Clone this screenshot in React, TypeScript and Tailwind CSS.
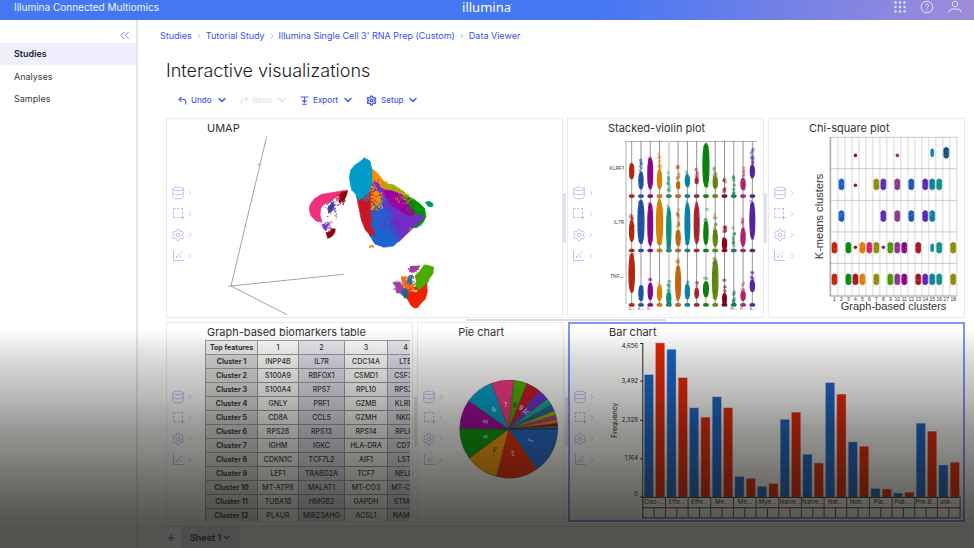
import React from "react";
import { ChevronDown, ChevronRight, ChevronsLeft, Database, Settings, Plus } from "lucide-react";

/* Small deterministic generator, so every render draws the same cloud of points. */
function makeRandom(seed: number) {
  let state = seed;
  return () => {
    state = (state * 1664525 + 1013904223) % 4294967296;
    return state / 4294967296;
  };
}

const CLUSTER_COLORS = [
  "#c81e0a", "#1c5fbf", "#028a0a", "#a8101e", "#e07a00", "#cf2468", "#8c8c00", "#5a28b4", "#459600",
  "#8c3488", "#8a0088", "#1a55b0", "#a01424", "#5c22b0", "#0880a4", "#0c9080", "#14507c", "#8c8c00",
];

/* ---------- Header ---------- */

function Header() {
  return (
    <header className="grid h-5 grid-cols-[1fr_auto_1fr] items-start bg-[linear-gradient(100deg,#4677f3_62%,#7782e4_82%,#9f8cd8_100%)] text-white">
      <span className="pl-[14px] text-[10px] leading-[14px] text-blue-50">Illumina Connected Multiomics</span>
      <span className="flex font-['Noto_Sans',sans-serif] text-[13px] leading-[14px]">
        illumina
        <span aria-hidden="true" className="mt-1 size-px rounded-full bg-white" />
      </span>
      <div className="flex h-[14px] items-center justify-end gap-[14px] pr-3 text-blue-100">
        <button aria-label="Apps">
          <svg width="12" height="12" viewBox="0 0 12 12" fill="currentColor">
            {[1.5, 6, 10.5].map((y) => [1.5, 6, 10.5].map((x) => <circle key={`${x}-${y}`} cx={x} cy={y} r="1.2" />))}
          </svg>
        </button>
        <button aria-label="Help">
          <svg width="14" height="14" viewBox="0 0 14 14" fill="none" stroke="currentColor">
            <circle cx="7" cy="7" r="5.8" />
            <path d="M5.5 5.6a1.5 1.5 0 1 1 2.3 1.3c-.6.3-.8.6-.8 1.2M7 9.3v1" />
          </svg>
        </button>
        <button aria-label="Account">
          <svg width="14" height="14" viewBox="0 0 14 14" fill="none" stroke="currentColor">
            <circle cx="7" cy="4" r="2.8" />
            <path d="M1 12.6c0-2.4 1.4-3.6 3.4-3.6h5.2c2 0 3.4 1.2 3.4 3.6" />
          </svg>
        </button>
      </div>
    </header>
  );
}

/* ---------- Side navigation ---------- */

function Sidebar() {
  return (
    <nav aria-label="Main" className="w-[138px] shrink-0 border-r-2 border-[#e6e6ea] text-[9px] text-[#3a3a40]">
      <div className="flex h-[23px] items-end justify-end pr-1">
        <button aria-label="Collapse menu" className="text-[#6b7af8]">
          <ChevronsLeft size={15} strokeWidth={1.6} />
        </button>
      </div>
      <ul>
        <li>
          <a href="#studies" aria-current="page" className="flex h-[22px] items-center bg-[#eeeefc] pl-[14px] font-semibold text-[#1f1f28]">
            Studies
          </a>
        </li>
        <li>
          <a href="#analyses" className="flex h-[23px] items-center pl-[14px]">Analyses</a>
        </li>
        <li>
          <a href="#samples" className="flex h-[22px] items-center pl-[14px]">Samples</a>
        </li>
      </ul>
    </nav>
  );
}

/* ---------- Page head ---------- */

const CRUMBS = ["Studies", "Tutorial Study", "Illumina Single Cell 3' RNA Prep (Custom)", "Data Viewer"];

function Breadcrumbs() {
  return (
    <nav aria-label="Breadcrumb" className="-ml-[6px] pt-2">
      <ol className="flex h-[15px] items-center text-[9px] text-[#3a4ef0]">
        {CRUMBS.map((crumb, i) => (
          <li key={crumb} className="flex items-center">
            {i > 0 && <ChevronRight size={8} strokeWidth={2} className="mx-[3px] text-gray-400" />}
            <a href="#crumb">{crumb}</a>
          </li>
        ))}
      </ol>
    </nav>
  );
}

function UndoIcon() {
  return (
    <svg width="9" height="9" viewBox="0 0 9 9" fill="none" stroke="currentColor" strokeWidth="1.1">
      <path d="M3.5.8 1 3.3l2.5 2.5M1 3.3h4.2c1.6 0 2.6 1 2.6 2.4v2.8" />
    </svg>
  );
}

function ExportIcon() {
  return (
    <svg width="9" height="9" viewBox="0 0 9 9" fill="none" stroke="currentColor" strokeWidth="1.1">
      <path d="M.5 1h8M4.5 1v5M2.3 4.2l2.2 2.2 2.2-2.2M2 8.2h5" />
    </svg>
  );
}

function Toolbar() {
  return (
    <div className="mt-[7px] flex h-4 items-center gap-3 pl-3 text-[8px] font-medium text-[#4558ee]">
      <button className="flex items-center gap-1"><UndoIcon />Undo<ChevronDown size={12} strokeWidth={3} /></button>
      <button disabled className="flex items-center gap-1 text-[#e2e2e8]">
        <span className="-scale-x-100"><UndoIcon /></span>Redo<ChevronDown size={12} strokeWidth={3} />
      </button>
      <button className="flex items-center gap-1"><ExportIcon />Export<ChevronDown size={12} strokeWidth={3} /></button>
      <button className="flex items-center gap-1"><Settings size={11} strokeWidth={3} />Setup<ChevronDown size={12} strokeWidth={3} /></button>
    </div>
  );
}

/* ---------- Panel frame ---------- */

function SelectIcon() {
  return (
    <svg width="13" height="13" viewBox="0 0 13 13" fill="none" stroke="currentColor">
      <path d="M1.5 3.5v-2h2M5 1.5h2M8.500 1.500h2v2M10.500 5v2M1.500 5v2M1.500 8.500v2h2M5 10.500h2M10.500 8.500v4M8.500 10.500h4" />
    </svg>
  );
}

function PlotIcon() {
  return (
    <svg width="13" height="13" viewBox="0 0 13 13" fill="none" stroke="currentColor">
      <path d="M1.500 1v10.500h10.500" strokeWidth=".9" />
      <path d="M4 8.500 5.500 7M6 5l1 1M8 8l1.200-1.500M8.500 4l1.500-.8M6.500 8.500h.8" strokeWidth="1.200" />
    </svg>
  );
}

function PanelTools() {
  const tools = [
    { name: "Data", icon: <Database size={14} strokeWidth={1.5} /> },
    { name: "Select", icon: <SelectIcon /> },
    { name: "Configure", icon: <Settings size={14} strokeWidth={1.6} /> },
    { name: "Axes", icon: <PlotIcon /> },
  ];
  return (
    <div className="w-10 shrink-0 pt-[63px] pl-[3px] text-[#b2bafb]">
      {tools.map((tool) => (
        <button key={tool.name} aria-label={tool.name} className="flex h-[21px] items-center">
          <span className="flex w-4 justify-center">{tool.icon}</span>
          <ChevronRight size={8} strokeWidth={2} />
        </button>
      ))}
    </div>
  );
}

function Panel({ title, active, className, children }: { title: string; active?: boolean; className: string; children: React.ReactNode }) {
  return (
    <section
      className={`flex h-[200px] min-w-0 basis-0 overflow-hidden border ${active ? "border-[#8391fa] ring-1 ring-[#8391fa] ring-inset" : "border-[#eaeaee]"} ${className}`}
    >
      <PanelTools />
      <div className="flex min-w-0 flex-1 flex-col">
        <h2 className="h-[18px] shrink-0 text-[11px] leading-[18px] whitespace-nowrap text-[#303034]">{title}</h2>
        {children}
      </div>
    </section>
  );
}

function ColumnHandle() {
  return (
    <div className="flex w-1 shrink-0 items-center justify-center">
      <div className="h-[50px] w-[3px] bg-[#e2e2e4]" />
    </div>
  );
}

/* ---------- UMAP ---------- */

const UMAP_SHAPES: [string, string][] = [
  ["#ff8c00", "M215 70 235 88 252 110 262 145 250 175 235 192 214 200 208 150Z"],
  ["#a8a808", "M242 104 262 116 282 120 312 140 330 160 300 165 262 150Z"],
  ["#009600", "M318 152 345 165 360 177 374 190 378 215 370 232 358 243 338 250 325 200 305 170Z"],
  ["#7030c8", "M222 108 240 120 262 160 300 195 345 212 368 206 370 220 345 240 330 258 312 275 297 290 270 260 250 190 240 150Z"],
  ["#a000a0", "M248 134 275 137 308 150 322 175 348 205 330 214 300 196 270 178Z"],
  ["#1c64d0", "M210 198 240 190 262 196 285 225 300 285 280 303 252 307 225 297 208 270Z"],
  ["#c81828", "M170 156 190 155 212 138 212 200 214 250 228 268 212 272 196 255 184 225 177 190Z"],
  ["#009cc8", "M193 38 210 48 216 75 216 115 208 140 196 150 186 158 176 166 165 145 155 135 148 100 152 75 165 60 180 50Z"],
  ["#009664", "M376 172 388 169 399 176 398 185 386 185Z"],
  ["#f0307a", "M28 195 30 180 42 162 65 148 95 143 135 136 128 146 104 160 90 172 72 178 62 190 60 210 66 232 48 228 33 212Z"],
  ["#900010", "M78 262 88 264 95 252 106 252 103 265 92 277 83 280Z"],
  ["#900010", "M116 158 124 143 143 136 140 150 130 170 118 172Z"],
  ["#4038b8", "M84 186 98 172 104 178 96 198 86 205Z"],
  ["#8038c8", "M66 238 76 240 88 234 82 246 78 258 70 250Z"],
  ["#a040a0", "M332 364 358 363 355 372 342 382 328 380Z"],
  ["#f07018", "M304 395 314 396 322 412 340 420 345 432 325 438 308 422Z"],
  ["#206498", "M326 393 338 390 334 412 322 415Z"],
  ["#206498", "M304 432 318 430 326 440 322 462 306 450Z"],
  ["#a040a0", "M278 413 300 411 310 428 304 445 290 443 286 420Z"],
  ["#4caa00", "M372 360 384 361 401 366 399 386 390 398 380 420 352 440 346 428 350 408 345 392 358 380Z"],
  ["#f02000", "M318 455 332 440 350 442 380 416 382 440 376 462 362 476 355 486 345 490 334 482Z"],
];

const UMAP_SPECKLES: [number, number, number, number, number, string][] = [
  [232, 165, 20, 30, 110, "#ff8c00"], [230, 130, 20, 26, 60, "#7030c8"], [230, 185, 20, 18, 60, "#1c64d0"],
  [262, 215, 32, 48, 110, "#7030c8"], [285, 238, 18, 26, 45, "#a000a0"], [212, 200, 14, 70, 60, "#c81828"],
  [255, 185, 28, 30, 60, "#1c64d0"], [310, 160, 28, 16, 50, "#a8a808"], [320, 185, 28, 25, 70, "#a000a0"],
  [340, 185, 22, 24, 60, "#009600"], [350, 235, 20, 16, 30, "#7030c8"], [190, 155, 22, 12, 50, "#009cc8"],
  [190, 175, 16, 16, 30, "#c81828"], [250, 118, 14, 10, 25, "#ff8c00"], [290, 270, 14, 18, 40, "#7030c8"],
  [92, 190, 16, 20, 30, "#4038b8"], [125, 160, 15, 18, 40, "#900010"], [95, 262, 12, 14, 22, "#900010"],
  [80, 240, 14, 10, 20, "#8038c8"], [108, 168, 18, 14, 16, "#f0307a"], [96, 218, 16, 20, 9, "#d03020"],
  [100, 170, 16, 10, 9, "#10a080"], [214, 304, 6, 4, 16, "#f07018"], [332, 252, 5, 5, 9, "#f07018"],
  [340, 372, 16, 10, 26, "#a040a0"], [325, 410, 22, 18, 46, "#f07018"], [332, 405, 13, 15, 26, "#206498"],
  [290, 425, 14, 18, 22, "#a040a0"], [315, 445, 13, 15, 26, "#206498"], [340, 436, 20, 10, 36, "#f02000"],
  [352, 415, 14, 22, 22, "#4caa00"], [350, 368, 14, 8, 5, "#d03020"],
];

function UmapPlot() {
  const random = makeRandom(7);
  return (
    <svg role="img" aria-label="UMAP of cell clusters" viewBox="207 137 355 180" preserveAspectRatio="xMinYMin meet" className="block w-full overflow-visible">
      <g stroke="#8c8c8c" strokeWidth=".8" fill="none">
        <path d="M266.700 136.500 231 286 344 274.300M231 286 287 314.700M228.500 286h4M257.500 164.500h3M244 226h2.500" />
      </g>
      <g transform="translate(300 145) scale(.3333)">
        {UMAP_SHAPES.map(([color, d]) => (
          <path key={d} d={d} fill={color} stroke={color} strokeWidth="3" strokeLinejoin="round" strokeDasharray="3 1.500" />
        ))}
        {UMAP_SPECKLES.map(([cx, cy, rx, ry, count, color], group) =>
          Array.from({ length: count }, (_, i) => {
            const angle = random() * Math.PI * 2;
            const radius = Math.sqrt(random());
            const size = 2 + random() * 2;
            return <rect key={`${group}-${i}`} x={cx + Math.cos(angle) * radius * rx - 1} y={cy + Math.sin(angle) * radius * ry - 1} width={size} height={size} fill={color} />;
          }),
        )}
      </g>
    </svg>
  );
}

/* ---------- Stacked violin ---------- */

const VIOLIN_COLORS = ["#b8260f", "#1d52a6", "#86088a", "#d68200", "#0f8f7d", "#c4640f", "#0882aa", "#a8242f", "#0d8210", "#5f8a0e", "#8b0018", "#128055", "#b42468", "#5524a4"];

/* Per gene: [sparse top, dense top, bottom, half width], in thirds of a pixel below the plot's top. */
const VIOLINS: [string, number, [number, number, number, number][]][] = [
  ["KLRF1", 168, [
    [142, 146, 192, 7], [135, 172, 222, 7], [125, 130, 222, 8], [115, 165, 222, 7], [170, 235, 236, 6], [140, 200, 222, 5], [168, 180, 214, 7],
    [160, 190, 206, 5], [80, 86, 216, 10], [150, 185, 220, 7], [190, 232, 234, 6], [178, 234, 236, 3], [158, 190, 224, 7], [100, 150, 188, 7],
  ]],
  ["IL7R", 222, [
    [300, 315, 380, 7], [250, 255, 386, 10], [260, 264, 392, 8], [250, 255, 390, 10], [272, 278, 404, 7], [278, 345, 392, 7], [256, 264, 390, 8],
    [260, 266, 386, 8], [282, 318, 388, 7], [298, 345, 394, 7], [330, 370, 402, 7], [335, 390, 392, 5], [305, 340, 394, 7], [256, 262, 372, 8],
  ]],
  ["TNF...", 276, [
    [410, 416, 532, 9], [505, 512, 556, 7], [487, 505, 554, 7], [495, 512, 556, 7], [495, 532, 568, 7], [432, 452, 554, 8], [500, 508, 552, 7],
    [500, 520, 548, 6], [485, 500, 546, 8], [430, 436, 554, 9], [495, 535, 568, 6], [515, 566, 568, 4], [503, 528, 556, 7], [465, 495, 530, 7],
  ]],
];

function ViolinPlot() {
  const random = makeRandom(21);
  return (
    <svg role="img" aria-label="Expression of three genes by cluster" viewBox="608 137 155 180" preserveAspectRatio="xMinYMin meet" className="block w-full overflow-visible font-['Inter',sans-serif]">
      <path d="M626 141v163M625 141.500h132" stroke="#a0a0a0" strokeWidth=".8" />
      {VIOLIN_COLORS.map((color, i) => (
        <path key={color} d={`M${631.7 + i * 9.28} 141V306`} stroke={i === 4 || i === 8 ? "#d8d8d8" : "#777"} strokeWidth={i === 4 || i === 8 ? 2 : 0.8} />
      ))}
      {VIOLINS.map(([gene, labelY, shapes], row) => (
        <g key={gene}>
          <text x="624" y={labelY + 2} textAnchor="end" fontSize="5" fill="#444">{gene}</text>
          {shapes.map(([top, dense, bottom, half], i) => {
            const x = 631.7 + i * 9.28;
            const color = VIOLIN_COLORS[i];
            const y0 = 115 + top / 3;
            const y1 = 115 + dense / 3;
            const y2 = 115 + bottom / 3;
            const w = half / 3;
            const dots = Math.max(4, Math.round((y2 - y0) * 0.6));
            return (
              <g key={i}>
                {y2 - y1 > 2 && (
                  <path
                    d={`M${x} ${y1}C${x + w * 1.2} ${y1} ${x + w * 1.2} ${y2} ${x} ${y2}C${x - w * 1.2} ${y2} ${x - w * 1.2} ${y1} ${x} ${y1}Z`}
                    fill={color} stroke={color} strokeWidth="1.200"
                  />
                )}
                {Array.from({ length: dots }, (_, k) => (
                  <circle key={k} cx={x + (random() - 0.5) * w * 1.1} cy={y0 + random() * (y2 - y0)} r="1.200" fill={color} fillOpacity=".25" stroke={k % 4 === 0 && (i === 9 || i === 12) ? "#7a2f8c" : color} strokeOpacity=".6" strokeWidth=".5" />
                ))}
                <rect x={x - 2.8} y={194.5 + row * 54.4} width="5.600" height="3.200" rx="1.600" fill={color} stroke="#333" strokeOpacity=".5" strokeWidth=".5" />
              </g>
            );
          })}
        </g>
      ))}
      {["C...", "E...", "E...", "", "", "", "", "", "", "", "", "Pl...", "P...", "u..."].map((label, i) => (
        <text key={i} x={631.7 + i * 9.28} y="310" fontSize="4" textAnchor="middle" fill="#333">{label}</text>
      ))}
    </svg>
  );
}

/* ---------- Chi-square ---------- */

const CHI_ROWS: { pods: number[]; dots: number[] }[] = [
  { pods: [17, 15], dots: [4, 10] },
  { pods: [2, 7, 8, 10, 12, 14, 15, 16], dots: [4] },
  { pods: [2, 8, 10, 12, 14, 15], dots: [] },
  { pods: [1, 3, 5, 6, 7, 9, 10, 11, 13, 15, 16, 18], dots: [4, 8] },
  { pods: [1, 3, 4, 5, 7, 9, 10, 11, 13, 14, 15, 16, 18], dots: [] },
];

function ChiSquarePlot() {
  const random = makeRandom(5);
  return (
    <svg role="img" aria-label="K-means clusters against graph-based clusters" viewBox="809 137 154 180" preserveAspectRatio="xMinYMin meet" className="block w-full overflow-visible font-['Liberation_Sans',sans-serif]">
      <g stroke="#c4c4c8" strokeWidth=".7">
        {Array.from({ length: 19 }, (_, i) => <path key={i} d={`M${830.8 + i * 6.95} 137V295`} />)}
        {[137.3, 168.5, 200, 231.3, 262.700].map((y) => <path key={y} d={`M830 ${y}H956`} stroke="#b4b4b4" />)}
      </g>
      <path d="M830 137V295H956" fill="none" stroke="#888" strokeWidth=".9" />
      {CHI_ROWS.map((row, r) => {
        const y = 152.700 + r * 31.45;
        return (
          <g key={r}>
            {row.pods.map((col) => {
              const x = 834.3 + (col - 1) * 6.94;
              const color = CLUSTER_COLORS[col - 1];
              const small = (r === 0 || r === 3) && col === 15;
              return (
                <g key={col}>
                  <rect x={x - (small ? 1.5 : 2.5)} y={y - (small ? 4 : 5.3)} width={small ? 3 : 5} height={small ? 8 : 10.6} rx={small ? 1.5 : 2} fill={color} stroke={color} strokeWidth=".8" strokeDasharray="1 .5" />
                  {[0, 1, 2, 3, 4].map((k) => (
                    <circle key={k} cx={x + (random() - 0.5) * 3} cy={y + (random() - 0.5) * 8} r=".5" fill="#fff" fillOpacity=".22" />
                  ))}
                </g>
              );
            })}
            {row.dots.map((col) => (
              <circle key={col} cx={834.3 + (col - 1) * 6.94} cy={r === 0 ? 155.300 : r === 1 ? 185 : 246.500} r="1.800" fill={CLUSTER_COLORS[col - 1]} />
            ))}
          </g>
        );
      })}
      {CLUSTER_COLORS.map((_, i) => (
        <text key={i} x={834.3 + i * 6.94} y="300" fontSize="5" textAnchor="middle" fill="#333">{i + 1}</text>
      ))}
      <text x="893" y="309" fontSize="11" textAnchor="middle" fill="#333">Graph-based clusters</text>
      <text transform="translate(823 216) rotate(-90)" fontSize="11" textAnchor="middle" fill="#333">K-means clusters</text>
    </svg>
  );
}

/* ---------- Biomarkers table ---------- */

const BIOMARKERS = [
  ["INPP4B", "IL7R", "CDC14A", "LTB"],
  ["S100A9", "RBFOX1", "CSMD1", "CSF3R"],
  ["S100A4", "RPS7", "RPL10", "RPS27"],
  ["GNLY", "PRF1", "GZMB", "KLRD1"],
  ["CD8A", "CCL5", "GZMH", "NKG7"],
  ["RPS28", "RPS13", "RPS14", "RPLP1"],
  ["IGHM", "IGKC", "HLA-DRA", "CD74"],
  ["CDKN1C", "TCF7L2", "AIF1", "LST1"],
  ["LEF1", "TRABD2A", "TCF7", "NELL2"],
  ["MT-ATP8", "MALAT1", "MT-CO3", "MT-CO2"],
  ["TUBA1B", "HMGB2", "GAPDH", "STMN1"],
  ["PLAUR", "MIR23AHG", "ACSL1", "NAMPT"],
];

function BiomarkersTable() {
  return (
    <div className="-mt-px mr-[2px] -ml-[2px] min-h-0 flex-1 overflow-hidden">
      <table className="w-[218px] table-fixed border-collapse text-center text-[7px] leading-[13px] text-[#333]">
        <colgroup>
          <col className="w-[52px]" />
          <col className="w-[41px]" />
          <col className="w-[46px]" />
          <col className="w-[43px]" />
          <col className="w-[36px]" />
        </colgroup>
        <thead>
          <tr className="h-[14px] bg-[#f4f4f4]">
            <th scope="col" className="border border-[#9c9c9c] bg-[#f0f0f0] p-0 font-bold whitespace-nowrap">Top features</th>
            {[1, 2, 3, 4].map((n) => (
              <th key={n} scope="col" className="border border-[#9c9c9c] p-0 font-medium even:bg-white odd:bg-[#eaeaf2]">{n}</th>
            ))}
          </tr>
        </thead>
        <tbody>
          {BIOMARKERS.map((genes, row) => (
            <tr key={row} className="h-[14px]">
              <th scope="row" className="border border-[#9c9c9c] bg-[#dedede] p-0 font-bold">Cluster {row + 1}</th>
              {genes.map((gene) => (
                <td key={gene} className="border border-[#9c9c9c] p-0 font-medium whitespace-nowrap odd:bg-[#e0e2ee]">{gene}</td>
              ))}
            </tr>
          ))}
        </tbody>
      </table>
    </div>
  );
}

/* ---------- Pie ---------- */

/* End angle in degrees, clockwise from three o'clock. */
const SLICES: [number, string][] = [
  [55, "#1c64cc"], [104.500, "#e82400"], [143.600, "#f89800"], [180.500, "#009800"], [215.300, "#a000a0"], [249.500, "#00a0cc"],
  [276.200, "#f83484"], [291.900, "#4cac00"], [308.600, "#c81424"], [322, "#6c2cd4"], [330.500, "#10ac98"], [338.200, "#1c6498"],
  [343.800, "#acac00"], [348.700, "#a03ca0"], [353.400, "#f87000"], [356.500, "#980010"], [358.300, "#108060"], [360, "#4424a8"],
];

function PieChart() {
  const cx = 508.3;
  const cy = 430;
  const r = 49.5;
  const point = (deg: number, radius: number) => `${cx + radius * Math.cos((deg * Math.PI) / 180)} ${cy + radius * Math.sin((deg * Math.PI) / 180)}`;
  return (
    <svg role="img" aria-label="Share of cells by cluster" viewBox="457 341 106 180" preserveAspectRatio="xMinYMin meet" className="block w-full overflow-visible font-['Liberation_Sans',sans-serif]">
      {SLICES.map(([end, color], i) => {
        const start = i === 0 ? 0 : SLICES[i - 1][0];
        const mid = (start + end) / 2;
        return (
          <g key={color}>
            <path d={`M${cx} ${cy}L${point(start, r)}A${r} ${r} 0 0 1 ${point(end, r)}Z`} fill={color} stroke="#333" strokeWidth=".4" />
            {i < 10 && (
              <text transform={`translate(${point(mid, 24.5)}) rotate(${mid + 90})`} y="2" fontSize="7" textAnchor="middle" fill={i === 2 || i === 7 ? "#222" : "#fff"}>{i + 1}</text>
            )}
          </g>
        );
      })}
    </svg>
  );
}

/* ---------- Bars ---------- */

const BARS: [string, number, number][] = [
  ["Clas-...", 374.700, 343], ["Effe...", 349.300, 377.700], ["Effe...", 407.700, 417], ["Me...", 396.700, 407.700], ["Me...", 476.300, 478],
  ["Mye...", 486, 483.300], ["Naive...", 419.300, 412], ["Naive...", 454, 462.700], ["Nat...", 382.700, 394], ["Non...", 441.700, 446],
  ["Pla...", 488.300, 488.700], ["Plat-...", 492.700, 492], ["Pre-B...", 423, 431], ["unk-...", 464.700, 462],
];

function BarChart() {
  const base = 496.7;
  return (
    <svg role="img" aria-label="Frequency by cell type" viewBox="609 341 354 180" preserveAspectRatio="xMinYMin meet" className="block w-full overflow-visible font-['Inter',sans-serif]">
      {([["4,656", 343.5, 346], ["3,492", 381, 381], ["2,328", 420, 420], ["1,164", 458.5, 458], ["0", 496.5, 494]] as [string, number, number][]).map(([label, tick, y]) => (
        <g key={label}>
          <path d={`M640 ${tick}h3`} stroke="#222" />
          <text x="638" y={y + 2} fontSize="6" textAnchor="end" fill="#222">{label}</text>
        </g>
      ))}
      <text transform="translate(616.500 420) rotate(-90)" fontSize="7" textAnchor="middle" fill="#222">Frequency</text>
      <path d="M642.700 343V517.500" stroke="#222" />
      {BARS.map(([label, a, b], i) => {
        const x = 642.7 + i * 22.6;
        return (
          <g key={i}>
            <rect x={x + 1.5} y={a} width="9" height={base - a} fill="#1662c8" stroke="#b4c4dc" strokeWidth=".4" />
            <rect x={x + 12.8} y={b} width="9" height={base - b} fill="#e82200" stroke="#e8b4ac" strokeWidth=".4" />
            <path d={`M${x + 22.6} 497v20.500M${x + 11.3} 507.300v10`} stroke="#222" strokeWidth=".8" />
            <text x={x + 11.3} y="504" fontSize="6" textAnchor="middle" fill="#222">{label}</text>
          </g>
        );
      })}
      <path d="M642 497H959.500M642 507.300H959.500M642 517.400H959.500" stroke="#222" strokeWidth=".9" />
    </svg>
  );
}

/* ---------- Sheet tabs ---------- */

function SheetTabs() {
  return (
    <div className="-ml-[5px] mt-1 flex h-[22px] items-center border-t border-[#dcdce0] text-[9px] font-semibold text-[#33333a]">
      <button aria-label="Add sheet" className="flex w-5 justify-center text-[#4a5cf0]">
        <Plus size={10} strokeWidth={3} />
      </button>
      <button className="flex h-full items-center gap-px bg-[#e6e8fa] px-[9px]">
        Sheet 1<ChevronDown size={9} strokeWidth={3} />
      </button>
    </div>
  );
}

export default function App() {
  return (
    <div className="relative flex min-h-screen flex-col bg-white font-['Inter',sans-serif]">
      <Header />
      <div className="flex flex-1">
        <Sidebar />
        <main className="min-w-0 flex-1 pr-[9px] pl-7">
          <Breadcrumbs />
          <h1 className="mt-[14px] h-7 text-[18px] leading-7 font-light text-[#1c1c20]">Interactive visualizations</h1>
          <Toolbar />
          <div className="mt-[10px] flex">
            <Panel title="UMAP" className="grow-[397]"><UmapPlot /></Panel>
            <ColumnHandle />
            <Panel title="Stacked-violin plot" className="grow-[196]"><ViolinPlot /></Panel>
            <ColumnHandle />
            <Panel title="Chi-square plot" className="grow-[196]"><ChiSquarePlot /></Panel>
          </div>
          <div className="flex h-1 items-center justify-center">
            <div className="h-[2px] w-[200px] bg-[#dcdcde]" />
          </div>
          <div className="flex">
            <Panel title="Graph-based biomarkers table" className="grow-[247]"><BiomarkersTable /></Panel>
            <ColumnHandle />
            <Panel title="Pie chart" className="grow-[146]"><PieChart /></Panel>
            <ColumnHandle />
            <Panel title="Bar chart" active className="grow-[398]"><BarChart /></Panel>
          </div>
          <SheetTabs />
        </main>
      </div>
      <div
        aria-hidden="true"
        className="pointer-events-none absolute inset-x-0 bottom-0 h-[218px] bg-[linear-gradient(to_bottom,rgba(22,21,16,0)_0px,rgba(22,21,16,0.085)_15px,rgba(22,21,16,0.16)_30px,rgba(22,21,16,0.24)_50px,rgba(22,21,16,0.31)_70px,rgba(22,21,16,0.36)_80px,rgba(22,21,16,0.45)_100px,rgba(22,21,16,0.51)_120px,rgba(22,21,16,0.61)_150px,rgba(22,21,16,0.67)_170px,rgba(22,21,16,0.735)_195px,rgba(22,21,16,0.735)_218px)]"
      />
    </div>
  );
}
